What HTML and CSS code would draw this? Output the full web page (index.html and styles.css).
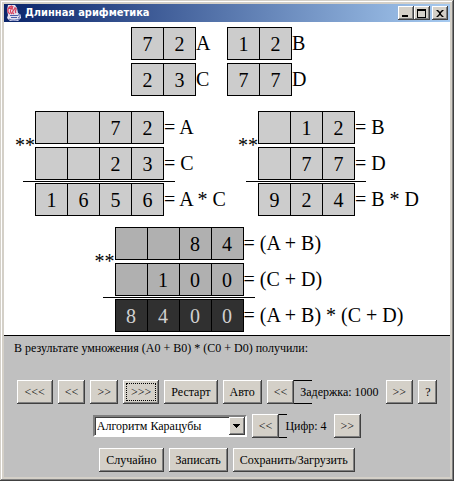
FILE: index.html
```html
<!DOCTYPE html>
<html lang="ru">
<head>
<meta charset="utf-8">
<title>Длинная арифметика</title>
<link rel="stylesheet" href="styles.css">
</head>
<body>
<div class="window">
  <header class="titlebar">
    <svg class="logo" viewBox="0 0 16 16" aria-hidden="true">
      <path fill="#e4e0f0" d="M2 0h7l2 3 1 5 3 2v3l-3 3H4l-3-3 1-3-1-5z"/>
      <path fill="none" stroke="#d8405c" stroke-width="1.3" d="M4 9C0 6 2 2 6 1M6 9C2 5 6 4 7 1M8 9C4 6 10 5 9 2M10 8C8 6 11 5 10 3M3 3l4 1"/>
      <path fill="none" stroke="#4a5fa8" stroke-width="1" d="M4 10.5h8M5 12.5h6M3 14c3 2 8 1 11 0M12 10c3-1 3 2 0 3"/>
    </svg>
    <h1 class="title">Длинная арифметика</h1>
    <div class="caption-buttons">
      <button class="caption" type="button" aria-label="Свернуть"><svg viewBox="0 0 12 10"><path d="M3 7h6v2H3z"/></svg></button>
      <button class="caption" type="button" aria-label="Развернуть"><svg viewBox="0 0 12 10"><path fill-rule="evenodd" d="M2 1h9v9H2zM3 3v6h7V3z"/></svg></button>
      <button class="caption close" type="button" aria-label="Закрыть"><svg viewBox="0 0 12 10"><path d="M3 2h2l2 2 2-2h2L8 5v1l3 3H9L7 7 5 9H3l3-3V5z"/></svg></button>
    </div>
  </header>

  <main class="canvas">
    <section class="operands">
      <div class="operand"><span class="cells"><span>7</span><span>2</span></span>A</div>
      <div class="operand"><span class="cells"><span>1</span><span>2</span></span>B</div>
      <div class="operand"><span class="cells"><span>2</span><span>3</span></span>C</div>
      <div class="operand"><span class="cells"><span>7</span><span>7</span></span>D</div>
    </section>

    <div class="products">
      <section class="product">
        <span class="sign">**</span>
        <span class="cells first"><span></span><span></span><span>7</span><span>2</span></span>
        <span class="label first">= A</span>
        <span class="cells second"><span></span><span></span><span>2</span><span>3</span></span>
        <span class="label second">= C</span>
        <hr class="rule">
        <span class="cells result"><span>1</span><span>6</span><span>5</span><span>6</span></span>
        <span class="label result">= A * C</span>
      </section>
      <section class="product">
        <span class="sign">**</span>
        <span class="cells first"><span></span><span>1</span><span>2</span></span>
        <span class="label first">= B</span>
        <span class="cells second"><span></span><span>7</span><span>7</span></span>
        <span class="label second">= D</span>
        <hr class="rule">
        <span class="cells result"><span>9</span><span>2</span><span>4</span></span>
        <span class="label result">= B * D</span>
      </section>
    </div>

    <section class="product active">
      <span class="sign">**</span>
      <span class="cells first"><span></span><span></span><span>8</span><span>4</span></span>
      <span class="label first">= (A + B)</span>
      <span class="cells second"><span></span><span>1</span><span>0</span><span>0</span></span>
      <span class="label second">= (C + D)</span>
      <hr class="rule">
      <span class="cells result"><span>8</span><span>4</span><span>0</span><span>0</span></span>
      <span class="label result">= (A + B) * (C + D)</span>
    </section>
  </main>

  <footer class="panel">
    <p class="comment">В результате умножения (A0 + B0) * (C0 + D0) получили:</p>
    <div class="controls">
      <button class="btn jump" type="button">&lt;&lt;&lt;</button>
      <button class="btn" type="button">&lt;&lt;</button>
      <button class="btn" type="button">&gt;&gt;</button>
      <button class="btn jump focused" type="button">&gt;&gt;&gt;</button>
      <button class="btn" type="button">Рестарт</button>
      <button class="btn" type="button">Авто</button>
      <div class="spinner">
        <button class="btn" type="button">&lt;&lt;</button>
        <output class="value">Задержка: 1000</output>
        <button class="btn" type="button">&gt;&gt;</button>
      </div>
      <button class="btn" type="button">?</button>
    </div>
    <div class="controls">
      <div class="choice">
        <select class="select" aria-label="Алгоритм"><option>Алгоритм Карацубы</option></select>
        <svg class="arrow" viewBox="0 0 16 18" aria-hidden="true"><path d="M4 7h7v1h-1v1H9v1H8v1H7v-1H6V9H5V8H4z"/></svg>
      </div>
      <div class="spinner">
        <button class="btn" type="button">&lt;&lt;</button>
        <output class="value short">Цифр: 4</output>
        <button class="btn" type="button">&gt;&gt;</button>
      </div>
    </div>
    <div class="controls">
      <button class="btn" type="button">Случайно</button>
      <button class="btn" type="button">Записать</button>
      <button class="btn" type="button">Сохранить/Загрузить</button>
    </div>
  </footer>
</div>
</body>
</html>
```
FILE: styles.css
```css
* {
  box-sizing: border-box;
}

body {
  margin: 0;
  font-family: "Liberation Serif", serif;
  font-size: 12px;
  color: #000;
}

.window {
  display: flex;
  flex-direction: column;
  min-height: 100vh;
  padding: 4px;
  background: #d4d0c8;
  box-shadow: inset -1px -1px #404040, inset 1px 1px #d4d0c8,
    inset -2px -2px #808080, inset 2px 2px #fff;
}

.titlebar {
  display: flex;
  align-items: center;
  height: 18px;
  padding: 0 2px;
  background: linear-gradient(to right, #0a246a, #a6caf0);
}

.logo {
  width: 16px;
  height: 16px;
}

.title {
  flex: 1;
  margin: 0 0 0 3px;
  font: bold 11px/18px "DejaVu Sans Condensed", "Noto Sans", sans-serif;
  color: #fff;
}

.caption-buttons {
  display: flex;
}

.caption {
  width: 16px;
  height: 14px;
  padding: 0 0 0 1px;
  border: 0;
  background: #d4d0c8;
  box-shadow: inset -1px -1px #404040, inset 1px 1px #fff, inset -2px -2px #808080;
}

.caption svg {
  display: block;
  width: 12px;
  height: 10px;
}

.close {
  margin-left: 2px;
}

.canvas {
  padding: 5px 0 3px;
  background: #fff;
  border-bottom: 1px solid #000;
  font-size: 20px;
  line-height: 33px;
}

.operands {
  display: grid;
  grid-template-columns: 96px 96px;
  gap: 3px 0;
  justify-content: center;
  margin-bottom: 15px;
}

.operand {
  display: flex;
}

.cells {
  display: flex;
  border: solid #000;
  border-width: 1px 0 1px 1px;
  background: #ccc;
}

.cells span {
  width: 32px;
  height: 31px;
  border-right: 1px solid #000;
  text-align: center;
}

.products {
  display: flex;
  justify-content: center;
  gap: 12px;
  margin-bottom: 11px;
  padding-right: 20px;
}

.product {
  display: grid;
  grid-template-columns: 8px 12px auto 11px auto;
  grid-template-rows: 33px 3px 33px 1px 1px 1px 33px;
  justify-content: center;
}

.active {
  padding-left: 44px;
}

.sign {
  grid-area: 1 / 1 / 4 / 3;
  align-self: center;
}

.cells.first {
  grid-area: 1 / 3;
}

.cells.second {
  grid-area: 3 / 3;
}

.cells.result {
  grid-area: 7 / 3;
}

.label.first {
  grid-area: 1 / 4 / 2 / 6;
}

.label.second {
  grid-area: 3 / 4 / 4 / 6;
}

.label.result {
  grid-area: 7 / 4 / 8 / 6;
}

.rule {
  grid-area: 5 / 2 / 6 / 5;
  width: 100%;
  margin: 0;
  border: 0;
  background: #000;
}

.active .cells {
  background: #b0b0b0;
}

.active .cells.result {
  background: #303030;
  color: #d0d0d0;
}

.panel {
  flex: 1;
  padding: 4px 10px 5px;
  background: #c0c0c0;
}

.comment {
  margin: 0 0 24px;
  line-height: 16px;
}

.controls {
  display: flex;
  justify-content: center;
  align-items: center;
  gap: 5px;
  margin-bottom: 10px;
}

.controls:last-child {
  margin-bottom: 0;
}

.btn {
  height: 24px;
  padding: 0 7px;
  border: 0;
  background: #d4d0c8;
  box-shadow: inset -1px -1px #404040, inset 1px 1px #fff, inset -2px -2px #808080;
  font: inherit;
  color: inherit;
  white-space: nowrap;
}

.jump {
  padding: 0 8px;
}

.focused {
  outline: 1px dotted #000;
  outline-offset: -4px;
}

.spinner {
  display: flex;
}

.value {
  position: relative;
  padding: 0 7px 0 6px;
  line-height: 24px;
  white-space: nowrap;
}

.value::before {
  content: "";
  position: absolute;
  inset: 0 auto 0 0;
  width: 18px;
  border: solid #000;
  border-width: 1px 0;
}

.value.short::before {
  width: 8px;
}

.choice {
  position: relative;
}

.select {
  display: block;
  appearance: none;
  width: 154px;
  height: 22px;
  padding: 0 20px 0 2px;
  border: 2px solid;
  border-color: #808080 #fff #fff #808080;
  border-radius: 0;
  background: #fff;
  box-shadow: inset 1px 1px #404040;
  font: inherit;
  color: inherit;
}

.arrow {
  position: absolute;
  top: 2px;
  right: 2px;
  width: 16px;
  height: 18px;
  background: #d4d0c8;
  box-shadow: inset -1px -1px #404040, inset 1px 1px #fff, inset -2px -2px #808080;
  pointer-events: none;
}
```
